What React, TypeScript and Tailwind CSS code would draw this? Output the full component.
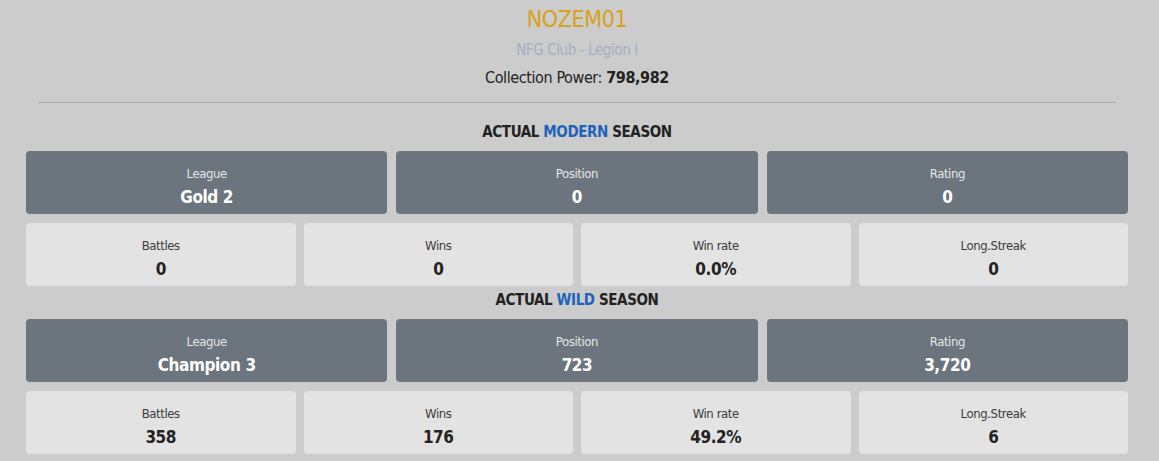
const font = { fontFamily: '"Liberation Sans Narrow", "DejaVu Sans Condensed", "Roboto", sans-serif', letterSpacing: "-0.4px" };

type Stat = { label: string; value: string };

function DarkCard({ label, value }: Stat) {
  return (
    <div className="bg-[#6c757d] rounded-[4px] h-[63px] pt-[8px] flex flex-col items-center justify-center">
      <div className="text-[13px] leading-[16px] text-[#e4e6e8]">{label}</div>
      <div className="text-[17px] leading-[22px] font-bold text-white mt-[4px]">{value}</div>
    </div>
  );
}

function LightCard({ label, value }: Stat) {
  return (
    <div className="bg-[#e3e3e3] rounded-[4px] h-[63px] pt-[8px] flex flex-col items-center justify-center">
      <div className="text-[13px] leading-[16px] text-[#3a3a3a]">{label}</div>
      <div className="text-[17px] leading-[22px] font-bold text-[#222] mt-[4px]">{value}</div>
    </div>
  );
}

function Season({ name, top, bottom }: { name: string; top: Stat[]; bottom: Stat[] }) {
  return (
    <div>
      <div className="h-[38px] flex items-center justify-center text-[15px] font-bold text-[#222] pt-[1px]">
        ACTUAL&nbsp;<span className="text-[#1f63b8]">{name}</span>&nbsp;SEASON
      </div>
      <div className="grid grid-cols-3 gap-[9px]">
        {top.map((s) => (
          <DarkCard key={s.label} {...s} />
        ))}
      </div>
      <div className="grid grid-cols-4 gap-2 mt-[9px]">
        {bottom.map((s) => (
          <LightCard key={s.label} {...s} />
        ))}
      </div>
    </div>
  );
}

export default function App() {
  return (
    <div className="w-[1159px] h-[461px] bg-[#cccccc] overflow-hidden" style={font}>
      <div className="px-[26px] pr-[31px]">
        {/* Header */}
        <div className="text-center pt-[4px]">
          <div className="text-[23px] leading-[30px] text-[#d9a21b]">NOZEM01</div>
          <div className="text-[15px] leading-[20px] text-[#a3afc4] mt-[6px]">NFG Club - Legion I</div>
          <div className="text-[16px] leading-[20px] text-[#222] mt-[8px]">
            Collection Power: <span className="font-bold">798,982</span>
          </div>
        </div>
        <div className="mx-[12px] mt-[14px] border-t border-[#a9a9a9]" />

        <div className="mt-[10px]">
          <Season
            name="MODERN"
            top={[
              { label: "League", value: "Gold 2" },
              { label: "Position", value: "0" },
              { label: "Rating", value: "0" },
            ]}
            bottom={[
              { label: "Battles", value: "0" },
              { label: "Wins", value: "0" },
              { label: "Win rate", value: "0.0%" },
              { label: "Long.Streak", value: "0" },
            ]}
          />
        </div>
        <div className="-mt-[5px]">
          <Season
            name="WILD"
            top={[
              { label: "League", value: "Champion 3" },
              { label: "Position", value: "723" },
              { label: "Rating", value: "3,720" },
            ]}
            bottom={[
              { label: "Battles", value: "358" },
              { label: "Wins", value: "176" },
              { label: "Win rate", value: "49.2%" },
              { label: "Long.Streak", value: "6" },
            ]}
          />
        </div>
      </div>
    </div>
  );
}
